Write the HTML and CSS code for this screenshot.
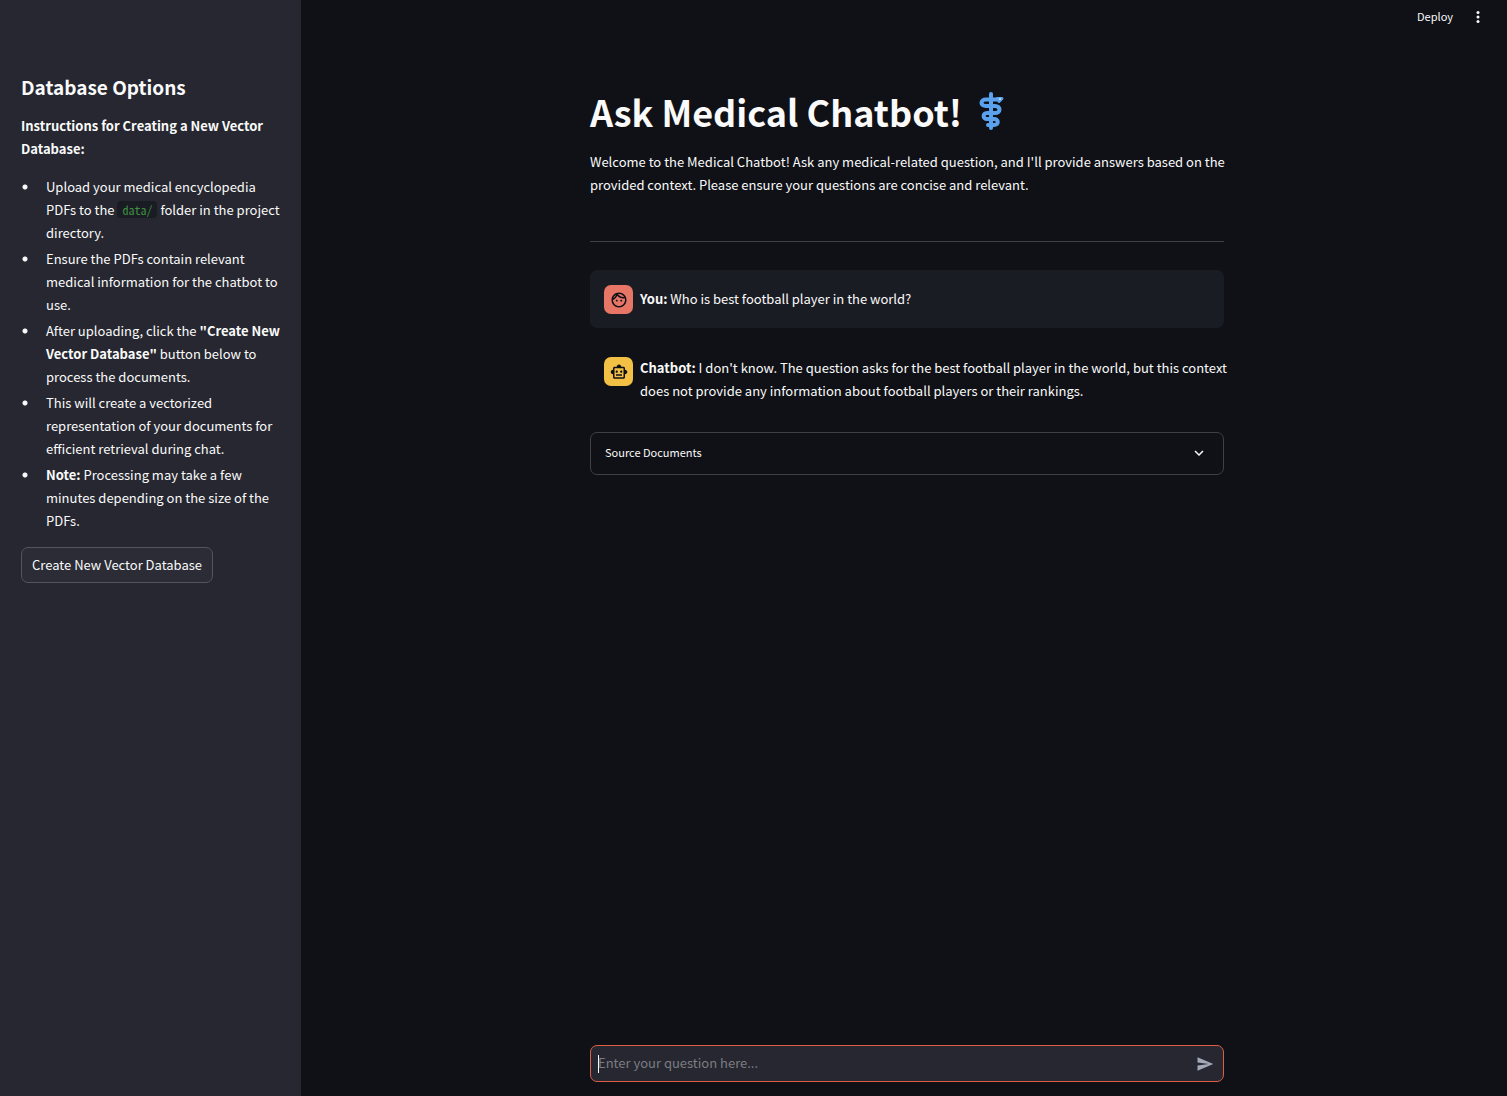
FILE: index.html
```html
<!DOCTYPE html>
<html lang="en">
<head>
<meta charset="utf-8">
<meta name="viewport" content="width=device-width, initial-scale=1">
<title>Medical Chatbot</title>
<link rel="stylesheet" href="styles.css">
</head>
<body>
<div class="app">
  <aside class="sidebar">
    <h2>Database Options</h2>
    <p class="lead"><strong>Instructions for Creating a New Vector Database:</strong></p>
    <ul class="steps">
      <li>Upload your medical encyclopedia PDFs to the <code>data/</code> folder in the project directory.</li>
      <li>Ensure the PDFs contain relevant medical information for the chatbot to use.</li>
      <li>After uploading, click the <strong>"Create New Vector Database"</strong> button below to process the documents.</li>
      <li>This will create a vectorized representation of your documents for efficient retrieval during chat.</li>
      <li><strong>Note:</strong> Processing may take a few minutes depending on the size of the PDFs.</li>
    </ul>
    <button class="create" type="button">Create New Vector Database</button>
  </aside>

  <div class="page">
    <header class="toolbar">
      <button class="deploy" type="button">Deploy</button>
      <button class="menu" type="button" aria-label="Main menu">
        <svg width="18" height="18" viewBox="0 0 24 24" fill="currentColor"><circle cx="12" cy="6" r="2"/><circle cx="12" cy="12" r="2"/><circle cx="12" cy="18" r="2"/></svg>
      </button>
    </header>

    <main class="content">
      <h1>Ask Medical Chatbot!
        <svg class="staff" width="26" height="40" viewBox="0 0 26 40" fill="none" stroke="#5aa2ee" stroke-linecap="round" stroke-linejoin="round" role="img" aria-label="Medical symbol">
          <path stroke-width="4" d="M13 3v34"/>
          <path stroke-width="4" d="M21 8.500H8c-6 0-6 6.500 0 6.500h9c6 0 6 7 0 7H9c-4.500 0-4.500 6 0 6h7c5 0 5 6 0 6h-6"/>
          <path stroke-width="3" d="M19 7.500h5l-3 3"/>
          <circle cx="22" cy="8" r="1" fill="#d5e8fb" stroke="none"/>
        </svg>
      </h1>
      <p class="intro">Welcome to the Medical Chatbot! Ask any medical-related question, and I'll provide answers based on the provided context. Please ensure your questions are concise and relevant.</p>
      <hr>
      <div class="message user">
        <span class="avatar">
          <svg width="18" height="18" viewBox="0 0 24 24" fill="currentColor"><path d="M10.250 13c0 .69-.56 1.250-1.250 1.250S7.750 13.690 7.750 13s.56-1.250 1.250-1.250 1.250.56 1.250 1.250zM15 11.750c-.69 0-1.250.56-1.250 1.250s.56 1.250 1.250 1.250 1.250-.56 1.250-1.250-.56-1.250-1.250-1.250zm7 .25c0 5.520-4.480 10-10 10S2 17.520 2 12 6.480 2 12 2s10 4.480 10 10zM10.660 4.120C12.060 6.440 14.600 8 17.500 8c.46 0 .91-.05 1.340-.12C17.440 5.560 14.900 4 12 4c-.46 0-.91.05-1.340.12zM4.420 9.470c1.710-.97 3.030-2.550 3.660-4.440C6.370 6 5.050 7.580 4.420 9.470zM20 12c0-.78-.12-1.530-.33-2.240-.7.15-1.420.24-2.170.24-3.130 0-5.920-1.440-7.760-3.690C8.690 8.870 6.600 10.880 4 11.860c.01.04 0 .09 0 .14 0 4.410 3.590 8 8 8s8-3.590 8-8z"/></svg>
        </span>
        <p><strong>You:</strong> Who is best football player in the world?</p>
      </div>
      <div class="message bot">
        <span class="avatar">
          <svg width="18" height="18" viewBox="0 0 24 24" fill="currentColor"><path d="M20 9V7c0-1.100-.9-2-2-2h-3c0-1.660-1.340-3-3-3S9 3.340 9 5H6c-1.100 0-2 .9-2 2v2c-1.660 0-3 1.340-3 3s1.340 3 3 3v4c0 1.100.9 2 2 2h12c1.100 0 2-.9 2-2v-4c1.660 0 3-1.340 3-3s-1.340-3-3-3zm-2 10H6V7h12v12zm-9-6c-.83 0-1.500-.67-1.500-1.500S8.170 10 9 10s1.500.67 1.500 1.500S9.830 13 9 13zm7.500-1.500c0 .83-.67 1.500-1.500 1.500s-1.500-.67-1.500-1.500.67-1.500 1.500-1.500 1.500.67 1.500 1.500zM8 15h8v2H8v-2z"/></svg>
        </span>
        <p><strong>Chatbot:</strong> I don't know. The question asks for the best football player in the world, but this context does not provide any information about football players or their rankings.</p>
      </div>
      <details class="sources">
        <summary>
          <span>Source Documents</span>
          <svg width="18" height="18" viewBox="0 0 24 24" fill="currentColor"><path d="M7.410 8.590 12 13.170l4.590-4.580L18 10l-6 6-6-6z"/></svg>
        </summary>
      </details>
    </main>

    <form class="ask">
      <input type="text" aria-label="Your question" placeholder="Enter your question here...">
      <button type="button" aria-label="Send">
        <svg width="18" height="18" viewBox="0 0 24 24" fill="currentColor"><path d="M2.010 21 23 12 2.010 3 2 10l15 2-15 2z"/></svg>
      </button>
    </form>
  </div>
</div>
</body>
</html>
```

FILE: styles.css
```css
* { box-sizing: border-box; }

body {
  margin: 0;
  background: #0f1116;
  color: #fafafa;
  font-family: "Noto Sans CJK SC", "Noto Sans", sans-serif;
  font-size: 13px;
  line-height: 23px;
}

h1, h2, p, ul { margin: 0; }

button, input {
  font: inherit;
  color: inherit;
}

button {
  padding: 0;
  border: 0;
  background: none;
}

svg { display: block; }

.app {
  display: flex;
  min-height: 100vh;
}

/* Sidebar */
.sidebar {
  flex: 0 0 301px;
  padding: 71px 18px 24px 21px;
  background: #262730;
}

.sidebar h2 {
  font-size: 19px;
  line-height: 32px;
  font-weight: 700;
}

.lead { margin-top: 11px; }

.steps {
  display: grid;
  gap: 3px;
  margin: 15px 0;
  padding: 0;
  list-style: none;
}

.steps li {
  padding-left: 25px;
  background: radial-gradient(circle, #fafafa 2px, transparent 3px) 1px 9px / 6px 6px no-repeat;
}

code {
  padding: 0 5px;
  border-radius: 4px;
  background: #1a1c24;
  color: #3f9142;
  font-family: "Noto Sans Mono CJK SC", "DejaVu Sans Mono", monospace;
  font-size: 12px;
  line-height: 16px;
}

.create {
  height: 36px;
  padding: 0 10px 2px;
  border: 1px solid #53545c;
  border-radius: 7px;
  background: #2b2c36;
}

/* Main area */
.page {
  display: flex;
  flex: 1;
  flex-direction: column;
  align-items: center;
  min-width: 0;
  padding-left: 6px;
}

.toolbar {
  display: flex;
  align-items: center;
  justify-content: flex-end;
  gap: 16px;
  width: 100%;
  height: 34px;
  padding-right: 20px;
}

.deploy {
  padding-bottom: 2px;
  font-size: 11px;
}

.content, .ask {
  width: 100%;
  max-width: 634px;
}

.content {
  flex: 1;
  padding-top: 53px;
}

h1 {
  display: flex;
  align-items: center;
  gap: 16px;
  font-size: 36px;
  line-height: 48px;
  font-weight: 700;
}

.intro { margin: 15px -8px 0 0; }

hr {
  height: 1px;
  margin: 45px 0 28px;
  border: 0;
  background: #3e4045;
}

.message {
  display: flex;
  align-items: flex-start;
  gap: 7px;
  padding: 14px 0 14px 14px;
  border-radius: 7px;
}

.message p { margin-right: -8px; }

.user { background: #1a1c23; }
.user p { padding-top: 3px; }
.bot { margin-top: 14px; }

.avatar {
  display: grid;
  flex: none;
  place-items: center;
  width: 29px;
  height: 29px;
  margin-top: 1px;
  border-radius: 7px;
  color: #0f1116;
}

.user .avatar { background: #e87666; }
.bot .avatar { background: #f1c044; }

.sources {
  margin-top: 16px;
  border: 1px solid #3e4045;
  border-radius: 7px;
}

.sources summary {
  display: flex;
  align-items: center;
  justify-content: space-between;
  height: 41px;
  padding: 0 15px 2px 14px;
  font-size: 11px;
  list-style: none;
}

.ask {
  position: sticky;
  bottom: 14px;
  display: flex;
  align-items: center;
  height: 37px;
  margin-bottom: 14px;
  padding-right: 9px;
  border: 1px solid #dc5f45;
  border-radius: 7px;
  background: #262730;
}

/* The field's background carries a one-pixel text caret. */
.ask input {
  flex: 1;
  min-width: 0;
  height: 35px;
  padding: 0 7px 2px;
  border: 0;
  outline: 0;
  background: linear-gradient(#fafafa, #fafafa) 7px center / 1px 18px no-repeat;
}

.ask input::placeholder { color: #7c7d83; opacity: 1; }
.ask button { color: #a3a8b8; }
```
